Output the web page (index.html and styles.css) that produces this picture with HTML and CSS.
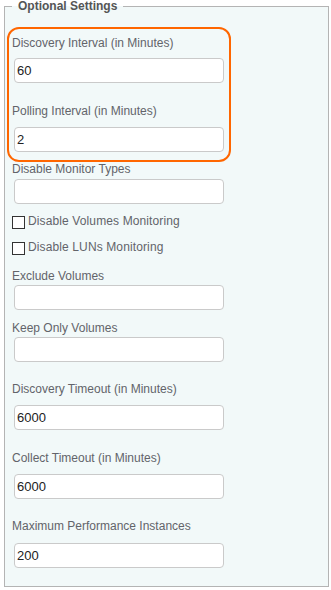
FILE: index.html
```html
<!DOCTYPE html>
<html lang="en">
<head>
<meta charset="UTF-8">
<meta name="viewport" content="width=device-width, initial-scale=1.0">
<title>Optional Settings</title>
<link rel="stylesheet" href="styles.css">
</head>
<body>

<fieldset class="settings">
    <legend>Optional Settings</legend>

    <div class="highlight">
        <label for="discoveryInterval">Discovery Interval (in Minutes)</label>
        <input type="text" id="discoveryInterval" value="60">
        <label for="pollingInterval" class="gap-lg">Polling Interval (in Minutes)</label>
        <input type="text" id="pollingInterval" value="2">
    </div>

    <label for="disableTypes">Disable Monitor Types</label>
    <input type="text" id="disableTypes" class="tight">

    <div class="check first">
        <input type="checkbox" id="disableVolumes">
        <label for="disableVolumes">Disable Volumes Monitoring</label>
    </div>
    <div class="check">
        <input type="checkbox" id="disableLuns">
        <label for="disableLuns">Disable LUNs Monitoring</label>
    </div>

    <label for="excludeVolumes" class="after-check">Exclude Volumes</label>
    <input type="text" id="excludeVolumes" class="tighter">

    <label for="keepVolumes" class="gap-sm">Keep Only Volumes</label>
    <input type="text" id="keepVolumes" class="tighter">

    <label for="discoveryTimeout" class="gap-md">Discovery Timeout (in Minutes)</label>
    <input type="text" id="discoveryTimeout" class="mid" value="6000">

    <label for="collectTimeout" class="gap-lg">Collect Timeout (in Minutes)</label>
    <input type="text" id="collectTimeout" class="mid" value="6000">

    <label for="maxInstances" class="gap-md">Maximum Performance Instances</label>
    <input type="text" id="maxInstances" class="loose" value="200">
</fieldset>

</body>
</html>
```

FILE: styles.css
```css
body {
    font-family: "Liberation Sans", Arial, sans-serif;
    background-color: #fff;
    margin: 0;
    padding: 0;
}
.settings {
    margin: 0 2px 0 4px;
    padding: 0 7px 18px 7px;
    border: 1px solid #b4b4b4;
    background-color: #f2f9f9;
}
.settings legend {
    padding: 0 6px;
    font-size: 12px;
    line-height: 12px;
    font-weight: bold;
    color: #555;
}
.highlight {
    margin: 15px 0 0 -5px;
    padding: 7px 0 8px 3px;
    width: 224px;
    box-sizing: border-box;
    border: 2px solid #ff6600;
    border-radius: 12px;
}
label {
    display: block;
    font-size: 12px;
    line-height: 14px;
    color: #62646a;
}
input[type="text"] {
    display: block;
    box-sizing: border-box;
    width: 210px;
    height: 25px;
    margin: 8px 0 0 2px;
    padding: 0 2px;
    border: 1px solid #cacaca;
    border-radius: 4px;
    background-color: #fff;
    font-family: "Liberation Sans", Arial, sans-serif;
    font-size: 13px;
    color: #222;
    outline: none;
}
.highlight #pollingInterval {
    margin-top: 9px;
}
input.mid {
    margin-top: 9px;
}
input.tight {
    margin-top: 3px;
}
input.tighter {
    margin-top: 2px;
}
input.loose {
    margin-top: 10px;
}
.gap-lg {
    margin-top: 21px;
}
.gap-md {
    margin-top: 20px;
}
.gap-sm {
    margin-top: 11px;
}
.after-check {
    margin-top: 14px;
}
.check {
    display: flex;
    align-items: flex-start;
    margin-top: 11px;
}
.check.first {
    margin-top: 10px;
}
.check input[type="checkbox"] {
    appearance: none;
    -webkit-appearance: none;
    width: 13px;
    height: 13px;
    margin: 2px 3px 0 0;
    border: 1px solid #333;
    background-color: #fff;
    box-sizing: border-box;
}
.check label {
    letter-spacing: 0.12px;
}
```
